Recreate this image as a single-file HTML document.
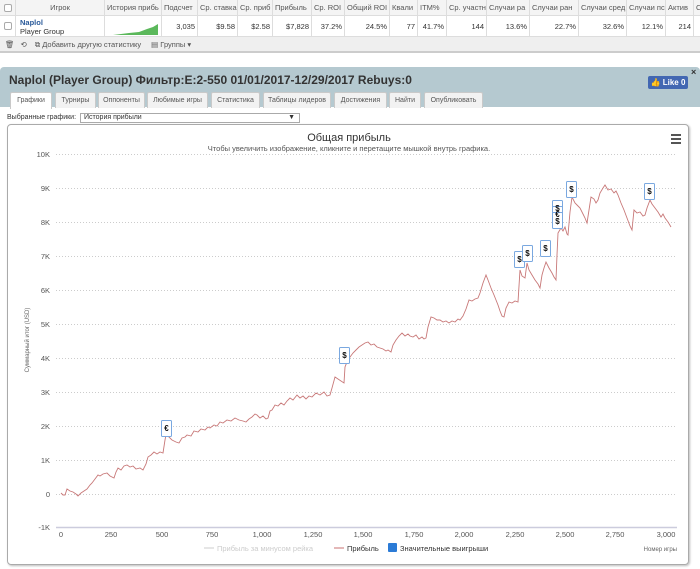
<!DOCTYPE html>
<html><head><meta charset="utf-8">
<style>
*{box-sizing:border-box;margin:0;padding:0}
body{width:700px;height:569px;overflow:hidden;background:#fff;font-family:"Liberation Sans","DejaVu Sans",sans-serif;font-size:8px;color:#333;position:relative}
.abs{position:absolute}
.hd{top:0;height:16px;left:0;width:700px;background:#f4f4f4;border-bottom:1px solid #ddd}
.row{top:16px;height:21px;left:0;width:700px;background:#fff;border-bottom:1px solid #ddd}
.c{position:absolute;top:0;height:100%;border-right:1px solid #ddd;white-space:nowrap;overflow:hidden;line-height:16px;color:#555;font-size:7.5px;padding:0 2px}
.row .c{line-height:21px;text-align:right;color:#333}
.tb{top:37px;height:16px;left:0;width:700px;background:#efefef;border-bottom:2px solid #ccc;color:#555;font-size:7.5px;line-height:16px}
.panel{top:67px;left:0;width:700px;height:502px;background:#b5c9d0;border-radius:4px 4px 0 0}
.tab{position:absolute;top:92px;height:16px;background:#f2f2f2;border:1px solid #c9c9c9;border-bottom:none;font-size:7px;color:#555;text-align:center;line-height:15px;border-radius:2px 2px 0 0}
</style></head><body>
<div class="abs hd">
<div class="c" style="left:0;width:16px"><div style="width:8px;height:8px;border:1px solid #aaa;border-radius:2px;margin:4px 2px;background:#fff"></div></div>
<div class="c" style="left:16px;width:89px;text-align:center">Игрок</div>
<div class="c" style="left:105px;width:57px">История прибь</div>
<div class="c" style="left:162px;width:36px">Подсчет</div>
<div class="c" style="left:198px;width:40px">Ср. ставка</div>
<div class="c" style="left:238px;width:35px">Ср. приб</div>
<div class="c" style="left:273px;width:39px">Прибыль</div>
<div class="c" style="left:312px;width:33px">Ср. ROI</div>
<div class="c" style="left:345px;width:45px">Общий ROI</div>
<div class="c" style="left:390px;width:28px">Квали</div>
<div class="c" style="left:418px;width:29px">ITM%</div>
<div class="c" style="left:447px;width:40px">Ср. участн</div>
<div class="c" style="left:487px;width:43px">Случаи ра</div>
<div class="c" style="left:530px;width:49px">Случаи ран</div>
<div class="c" style="left:579px;width:48px">Случаи сред</div>
<div class="c" style="left:627px;width:39px">Случаи пс</div>
<div class="c" style="left:666px;width:28px">Актив</div>
<div class="c" style="left:694px;width:10px">Ср</div>
</div>
<div class="abs row">
<div class="c" style="left:0;width:16px"><div style="width:8px;height:8px;border:1px solid #aaa;border-radius:2px;margin:6px 2px;background:#fff"></div></div>
<div class="c" style="left:16px;width:89px;text-align:left;line-height:9px;padding-top:2px;padding-left:4px"><b style="color:#2a5a9a">Naplol</b><br>Player Group</div>
<div class="c" style="left:105px;width:57px"><svg width="50" height="21"><polygon points="4,19 20,17 30,16 38,13 44,11 49,8 49,19" fill="#5bb85b"/></svg></div>
<div class="c" style="left:162px;width:36px">3,035</div>
<div class="c" style="left:198px;width:40px">$9.58</div>
<div class="c" style="left:238px;width:35px">$2.58</div>
<div class="c" style="left:273px;width:39px">$7,828</div>
<div class="c" style="left:312px;width:33px">37.2%</div>
<div class="c" style="left:345px;width:45px">24.5%</div>
<div class="c" style="left:390px;width:28px">77</div>
<div class="c" style="left:418px;width:29px">41.7%</div>
<div class="c" style="left:447px;width:40px">144</div>
<div class="c" style="left:487px;width:43px">13.6%</div>
<div class="c" style="left:530px;width:49px">22.7%</div>
<div class="c" style="left:579px;width:48px">32.6%</div>
<div class="c" style="left:627px;width:39px">12.1%</div>
<div class="c" style="left:666px;width:28px">214</div>
</div>
<div class="abs tb"><span style="margin-left:5px">🗑</span><span style="margin-left:6px">⟲</span><span style="margin-left:8px">⧉ Добавить другую статистику</span><span style="margin-left:10px">▤ Группы ▾</span></div>

<div class="abs panel"></div>
<div class="abs" style="left:9px;top:73px;font-size:12px;font-weight:bold;color:#333">Naplol (Player Group) Фильтр:E:2-550 01/01/2017-12/29/2017 Rebuys:0</div>
<div class="abs" style="left:648px;top:76px;width:40px;height:13px;background:#4267b2;border-radius:2px;color:#fff;font-size:8px;font-weight:bold;line-height:13px;text-align:center">👍 Like 0</div>
<div class="abs" style="left:691px;top:67px;font-size:9px;font-weight:bold">×</div>
<div class="abs" style="left:0;top:107px;width:700px;height:462px;background:#fff"></div>
<div class="tab" style="left:10px;width:42px;background:#fff;height:17px">Графики</div>
<div class="tab" style="left:55px;width:41px">Турниры</div>
<div class="tab" style="left:98px;width:47px">Оппоненты</div>
<div class="tab" style="left:147px;width:61px">Любимые игры</div>
<div class="tab" style="left:211px;width:49px">Статистика</div>
<div class="tab" style="left:263px;width:68px">Таблицы лидеров</div>
<div class="tab" style="left:334px;width:53px">Достижения</div>
<div class="tab" style="left:389px;width:32px">Найти</div>
<div class="tab" style="left:424px;width:59px">Опубликовать</div>
<div class="abs" style="left:7px;top:114px;font-size:7px;color:#333">Выбранные графики:</div>
<div class="abs" style="left:80px;top:113px;width:220px;height:10px;border:1px solid #aaa;font-size:7px;line-height:8px;padding-left:3px">История прибыли<span style="position:absolute;right:4px">▼</span></div>
<div class="abs" style="left:7px;top:124px;width:682px;height:441px;border:1px solid #aaa;border-radius:4px;box-shadow:1px 1px 2px #bbb"></div>
<svg class="abs" style="left:0;top:0" width="700" height="569">
<g font-family="Liberation Sans,DejaVu Sans,sans-serif">
<text x="349" y="141" font-size="11" text-anchor="middle" fill="#333">Общая прибыль</text>
<text x="349" y="151" font-size="7.5" text-anchor="middle" fill="#555">Чтобы увеличить изображение, кликните и перетащите мышкой внутрь графика.</text>
<g fill="#555"><rect x="671" y="134" width="10" height="2"/><rect x="671" y="138" width="10" height="2"/><rect x="671" y="142" width="10" height="2"/></g>
<g stroke="#ccc" stroke-dasharray="1,2" stroke-width="1">
<line x1="56" x2="677" y1="154.5" y2="154.5"/><line x1="56" x2="677" y1="188.5" y2="188.5"/><line x1="56" x2="677" y1="222.5" y2="222.5"/><line x1="56" x2="677" y1="256.5" y2="256.5"/><line x1="56" x2="677" y1="290.5" y2="290.5"/><line x1="56" x2="677" y1="324.5" y2="324.5"/><line x1="56" x2="677" y1="358.5" y2="358.5"/><line x1="56" x2="677" y1="392.5" y2="392.5"/><line x1="56" x2="677" y1="426.5" y2="426.5"/><line x1="56" x2="677" y1="460.5" y2="460.5"/><line x1="56" x2="677" y1="494.5" y2="494.5"/>
</g>
<line x1="56" x2="677" y1="527.5" y2="527.5" stroke="#ccd" stroke-width="1.5"/>
<g font-size="7.5" fill="#555" text-anchor="end">
<text x="50" y="157">10K</text><text x="50" y="191">9K</text><text x="50" y="225">8K</text><text x="50" y="259">7K</text><text x="50" y="293">6K</text><text x="50" y="327">5K</text><text x="50" y="361">4K</text><text x="50" y="395">3K</text><text x="50" y="429">2K</text><text x="50" y="463">1K</text><text x="50" y="497">0</text><text x="50" y="530">-1K</text>
</g>
<g font-size="7.5" fill="#555" text-anchor="middle">
<text x="61" y="537">0</text><text x="111" y="537">250</text><text x="162" y="537">500</text><text x="212" y="537">750</text><text x="262" y="537">1,000</text><text x="313" y="537">1,250</text><text x="363" y="537">1,500</text><text x="414" y="537">1,750</text><text x="464" y="537">2,000</text><text x="515" y="537">2,250</text><text x="565" y="537">2,500</text><text x="615" y="537">2,750</text><text x="666" y="537">3,000</text>
</g>
<text transform="translate(29,340) rotate(-90)" font-size="6" fill="#666" text-anchor="middle">Суммарный итог (USD)</text>
<text x="677" y="551" font-size="6" fill="#666" text-anchor="end">Номер игры</text>
<line x1="204" x2="214" y1="548" y2="548" stroke="#ccc"/><text x="217" y="551" font-size="7.5" fill="#ccc">Прибыль за минусом рейка</text>
<line x1="334" x2="344" y1="548" y2="548" stroke="#c87070"/><text x="347" y="551" font-size="7.5" fill="#333">Прибыль</text>
<rect x="388" y="543" width="9" height="9" fill="#2b7bd6" rx="1"/><text x="400" y="551" font-size="7.5" fill="#333">Значительные выигрыши</text>
<polyline fill="none" stroke="#c87878" stroke-width="0.9" points="61,493 63,495 65,495 67,489 70,491 73,492 76,494 78,496 81,493 84,491 87,489 90,485 92,483 95,479 98,475 100,476 103,474 107,473 110,476 114,478 116,472 118,468 121,470 124,466 127,465 130,467 133,466 136,469 140,468 143,470 146,464 148,457 151,455 154,452 157,454 160,452 163,453 165,440 166,435 169,437 172,440 176,442 179,443 182,438 185,437 187,435 191,436 194,431 198,432 201,429 205,430 208,427 210,428 214,425 217,426 220,422 223,423 227,420 231,421 235,418 239,420 243,421 246,422 249,419 252,417 255,414 257,415 260,418 263,416 266,419 268,418 270,411 272,410 275,405 278,406 281,403 284,405 287,401 290,398 293,400 297,395 300,398 303,396 306,399 309,396 312,397 316,393 320,395 324,392 327,396 330,395 332,388 335,377 338,379 341,381 344,383 345,367 347,362 350,357 353,353 356,350 359,347 362,345 365,343 368,342 371,345 374,344 377,347 380,348 383,349 386,351 388,350 391,352 393,345 396,340 399,336 402,333 405,336 408,334 410,336 413,337 416,335 419,339 422,337 424,339 426,338 428,327 431,317 434,318 437,320 440,320 443,322 446,321 449,323 452,321 455,322 458,319 460,320 463,316 466,309 469,300 472,301 475,299 478,298 480,293 483,283 486,275 488,280 491,288 494,295 496,300 498,305 500,311 502,316 504,317 506,308 509,302 512,303 515,301 518,302 520,270 522,276 525,278 527,263 529,270 532,275 535,280 538,284 540,288 542,275 544,268 546,262 549,268 552,273 554,277 556,280 557,255 558,233 561,228 563,231 565,227 567,234 568,235 570,212 572,197 575,203 578,206 580,208 583,214 585,218 587,223 589,210 591,197 594,199 596,203 598,200 600,193 603,188 605,185 608,190 611,189 614,193 616,191 618,195 621,203 624,210 627,218 630,226 632,230 633,220 634,210 637,213 640,212 643,216 645,215 647,208 650,200 652,204 655,208 658,212 661,217 663,214 665,218 668,222 671,227"/>
<g font-size="8" font-weight="bold" fill="#111" text-anchor="middle">
<g stroke="#7aa8e0" fill="#fff" stroke-width="1"><rect x="161.5" y="420.5" width="10" height="16" rx="1"/><rect x="339.5" y="347.5" width="10" height="16" rx="1"/><rect x="514.5" y="251.5" width="10" height="16" rx="1"/><rect x="522.5" y="245.5" width="10" height="16" rx="1"/><rect x="540.5" y="240.5" width="10" height="16" rx="1"/><rect x="552.5" y="200.5" width="10" height="16" rx="1"/><rect x="552.5" y="206.5" width="10" height="16" rx="1"/><rect x="552.5" y="212.5" width="10" height="16" rx="1"/><rect x="566.5" y="181.5" width="10" height="16" rx="1"/><rect x="644.5" y="183.5" width="10" height="16" rx="1"/></g>
<text x="166.5" y="431">€</text><text x="344.5" y="358">$</text><text x="519.5" y="262">$</text><text x="527.5" y="256">$</text><text x="545.5" y="251">$</text><text x="557.5" y="211">$</text><text x="557.5" y="217">€</text><text x="557.5" y="224">$</text><text x="571.5" y="192">$</text><text x="649.5" y="194">$</text>
</g>
</g>
</svg>
</body></html>
